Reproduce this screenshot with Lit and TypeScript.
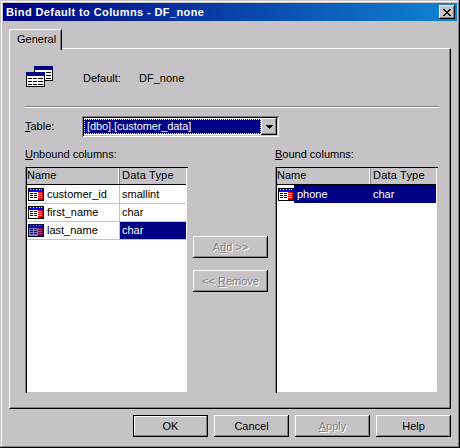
import { LitElement, html, css, svg } from "lit";
import { customElement } from "lit/decorators.js";

const columnIcon = (selected = false) => html`<svg class="cicon" width="16" height="13" viewBox="0 0 16 13" shape-rendering="crispEdges">
  <rect x="0" y="0" width="16" height="13" fill="#000"/>
  <rect x="1" y="1" width="14" height="3" fill="#0000ff"/>
  ${[2, 5, 8, 11, 13].map((x) => svg`<rect x="${x}" y="1" width="1" height="1" fill="#fff"/>`)}
  <rect x="1" y="4" width="9" height="8" fill="#fff"/>
  <rect x="10" y="4" width="5" height="8" fill="#e00000"/>
  ${[5, 7, 9].map((y) => svg`<rect x="2" y="${y}" width="3" height="1" fill="#000"/><rect x="6" y="${y}" width="3" height="1" fill="#000"/><rect x="10" y="${y}" width="4" height="1" fill="#fff" opacity=".7"/>`)}
  ${selected ? svg`<rect x="0" y="0" width="16" height="13" fill="#000084" opacity=".5"/>` : ""}
</svg>`;

const miniTable = (x: number, y: number) => svg`
  <rect x="${x}" y="${y}" width="19" height="15" fill="#000"/>
  <rect x="${x}" y="${y}" width="19" height="4" fill="#000084"/>
  <rect x="${x + 1}" y="${y + 4}" width="17" height="10" fill="#fff"/>
  ${[6, 9, 12].map((d) => svg`<rect x="${x + 2}" y="${y + d}" width="4" height="1" fill="#000"/><rect x="${x + 7}" y="${y + d}" width="4" height="1" fill="#000"/><rect x="${x + 12}" y="${y + d}" width="5" height="1" fill="#000"/>`)}
`;

const closeRows: [number, number][][] = [
  [[0, 2], [6, 2]],
  [[1, 2], [5, 2]],
  [[2, 4]],
  [[3, 2]],
  [[2, 4]],
  [[1, 2], [5, 2]],
  [[0, 2], [6, 2]],
];

@customElement("app-root")
export class AppRoot extends LitElement {
  static styles = css`
    :host { display: block; width: 460px; height: 448px; }
    * { box-sizing: border-box; }
    .window {
      width: 460px; height: 448px; background: #c6c3c6; padding: 3px 3px 0;
      display: flex; flex-direction: column;
      font: 11px/13px "Liberation Sans", Arial, sans-serif; color: #000;
      box-shadow: inset -1px -1px 0 #000, inset 1px 1px 0 #c6c3c6, inset -2px -2px 0 #848284, inset 2px 2px 0 #fff;
    }
    .title {
      height: 18px; width: 454px; padding: 0 2px 0 3px; display: flex; align-items: center; justify-content: space-between;
      background: linear-gradient(90deg, #000080, #1084d0);
      color: #fff; font-weight: 700; font-size: 11px; letter-spacing: .4px; flex: none;
    }
    .close {
      width: 16px; height: 14px; background: #c6c3c6; display: flex; align-items: center; justify-content: center;
      box-shadow: inset -1px -1px 0 #000, inset 1px 1px 0 #fff, inset -2px -2px 0 #848284;
    }
    .tabs { height: 28px; padding: 8px 0 0 6px; flex: none; display: flex; }
    .tab {
      width: 53px; height: 21px; padding: 3px 0 0 7px; background: #c6c3c6; position: relative; z-index: 1;
      border-left: 1px solid #fff; border-top: 1px solid #fff; border-right: 1px solid #000; border-top-left-radius: 2px;
      box-shadow: inset -1px 0 0 #848284;
    }
    .panel {
      margin-left: 6px; width: 442px; height: 361px; margin-top: -1px; flex: none;
      border-left: 1px solid #fff; border-top: 1px solid #fff; border-right: 1px solid #000; border-bottom: 1px solid #000;
      box-shadow: inset -1px -1px 0 #848284; padding: 17px 0 0 15px; display: flex; flex-direction: column;
    }
    .head { display: flex; height: 24px; align-items: center; flex: none; }
    .head svg { margin-left: 1px; flex: none; }
    .head .k { margin-left: 29px; width: 56px; }
    .sep { width: 414px; height: 2px; margin-top: 16px; background: #848284; border-bottom: 1px solid #fff; flex: none; }
    .tablerow { display: flex; align-items: center; margin-top: 8px; height: 21px; flex: none; }
    .tablerow label { width: 57px; }
    .combo {
      width: 197px; height: 21px; background: #fff; padding: 2px; display: flex;
      box-shadow: inset 1px 1px 0 #848284, inset -1px -1px 0 #fff, inset 2px 2px 0 #000, inset -2px -2px 0 #c6c3c6;
    }
    .value {
      flex: 1; background: #000084; color: #fff; outline: 1px dotted #ffff9c; outline-offset: -1px; padding: 1px 0 0 3px; margin: 1px 0;
      letter-spacing: -.1px;
    }
    .arrow {
      width: 16px; background: #c6c3c6; display: flex; align-items: center; justify-content: center;
      box-shadow: inset -1px -1px 0 #000, inset 1px 1px 0 #fff, inset -2px -2px 0 #848284;
    }
    .cols { display: grid; grid-template-columns: 163px 87px 163px; margin-top: 11px; flex: none; }
    .cols label { display: block; height: 13px; margin-bottom: 6px; }
    .list {
      height: 226px; background: #fff; padding: 1px 2px 2px; overflow: hidden;
      box-shadow: inset 1px 0 0 #848284, inset 2px 0 0 #000, inset 0 1px 0 #000, inset -1px -1px 0 #c6c3c6;
    }
    .hdr { display: flex; height: 17px; background: #c6c3c6; border-bottom: 1px solid #000; }
    .hdr div { padding: 1px 0 0; box-shadow: inset -2px 0 0 #fff; }
    .hdr div:first-child { box-shadow: inset -1px 0 0 #848284, inset -2px 0 0 #fff; }
    .hdr div:last-child { box-shadow: none; padding-left: 2px; letter-spacing: .2px; }
    .c1 { width: 93px; flex: none; }
    .c2 { flex: 1; }
    .right .c1 { width: 94px; }
    .row { display: flex; height: 18px; align-items: stretch; }
    .grid .hdr + .row { height: 19px; }
    .grid .row { border-bottom: 1px solid #c6c3c6; }
    .grid .row .c1 { border-right: 1px solid #c6c3c6; }
    .cell { display: flex; align-items: center; }
    .cicon { flex: none; margin: 0 3px 0 1px; }
    .c2.cell { padding-left: 2px; }
    .sel .c2 { background: #000084; color: #fff; }
    .bound .iconbox { width: 17px; flex: none; padding-left: 1px; display: flex; align-items: center; }
    .bound .iconbox .cicon { margin: 0; }
    .bound .name { flex: 1; align-self: stretch; background: #000084; color: #fff; display: flex; align-items: center; padding-left: 3px; }
    .moves { display: flex; flex-direction: column; gap: 12px; padding: 88px 0 0 5px; }
    button {
      width: 75px; height: 22px; padding: 0; border: 0; background: #c6c3c6; font: inherit; color: #000;
      box-shadow: inset -1px -1px 0 #000, inset 1px 1px 0 #fff, inset -2px -2px 0 #848284;
    }
    button[disabled] { color: #848284; text-shadow: 1px 1px 0 #fff; }
    button.default {
      box-shadow: inset 0 0 0 1px #000, inset -2px -2px 0 #848284, inset 2px 2px 0 #fff;
    }
    .footer { display: flex; gap: 6px; padding: 6px 0 0 130px; flex: none; }
    .footer button { flex: none; }
  `;

  render() {
    return html`<div class="window">
      <div class="title"><span>Bind Default to Columns - DF_none</span>
        <div class="close"><svg width="8" height="7" viewBox="0 0 8 7" shape-rendering="crispEdges">${closeRows.map((spans, y) => spans.map(([x, w]) => svg`<rect x="${x}" y="${y}" width="${w}" height="1" fill="#000"/>`))}</svg></div>
      </div>
      <div class="tabs"><div class="tab">General</div></div>
      <div class="panel">
        <div class="head">
          <svg width="28" height="24" viewBox="0 0 28 24" shape-rendering="crispEdges">${miniTable(8, 0)}${miniTable(0, 6)}</svg>
          <span class="k">Default:</span><span>DF_none</span>
        </div>
        <div class="sep"></div>
        <div class="tablerow">
          <label><u>T</u>able:</label>
          <div class="combo"><div class="value">[dbo].[customer_data]</div>
            <div class="arrow"><svg width="7" height="4" viewBox="0 0 7 4" shape-rendering="crispEdges"><path d="M0 0h7v1H6v1H5v1H4v1H3V3H2V2H1V1H0z"/></svg></div>
          </div>
        </div>
        <div class="cols">
          <div>
            <label><u>U</u>nbound columns:</label>
            <div class="list grid">
              <div class="hdr"><div class="c1">Name</div><div class="c2">Data Type</div></div>
              <div class="row"><div class="c1 cell">${columnIcon()}customer_id</div><div class="c2 cell">smallint</div></div>
              <div class="row"><div class="c1 cell">${columnIcon()}first_name</div><div class="c2 cell">char</div></div>
              <div class="row sel"><div class="c1 cell">${columnIcon(true)}last_name</div><div class="c2 cell">char</div></div>
            </div>
          </div>
          <div class="moves">
            <button disabled>A<u>d</u>d &gt;&gt;</button>
            <button disabled>&lt;&lt; <u>R</u>emove</button>
          </div>
          <div>
            <label><u>B</u>ound columns:</label>
            <div class="list right">
              <div class="hdr"><div class="c1">Name</div><div class="c2">Data Type</div></div>
              <div class="row sel bound"><div class="c1 cell"><span class="iconbox">${columnIcon()}</span><span class="name">phone</span></div><div class="c2 cell">char</div></div>
            </div>
          </div>
        </div>
      </div>
      <div class="footer">
        <button class="default">OK</button>
        <button>Cancel</button>
        <button disabled><u>A</u>pply</button>
        <button>Help</button>
      </div>
    </div>`;
  }
}
